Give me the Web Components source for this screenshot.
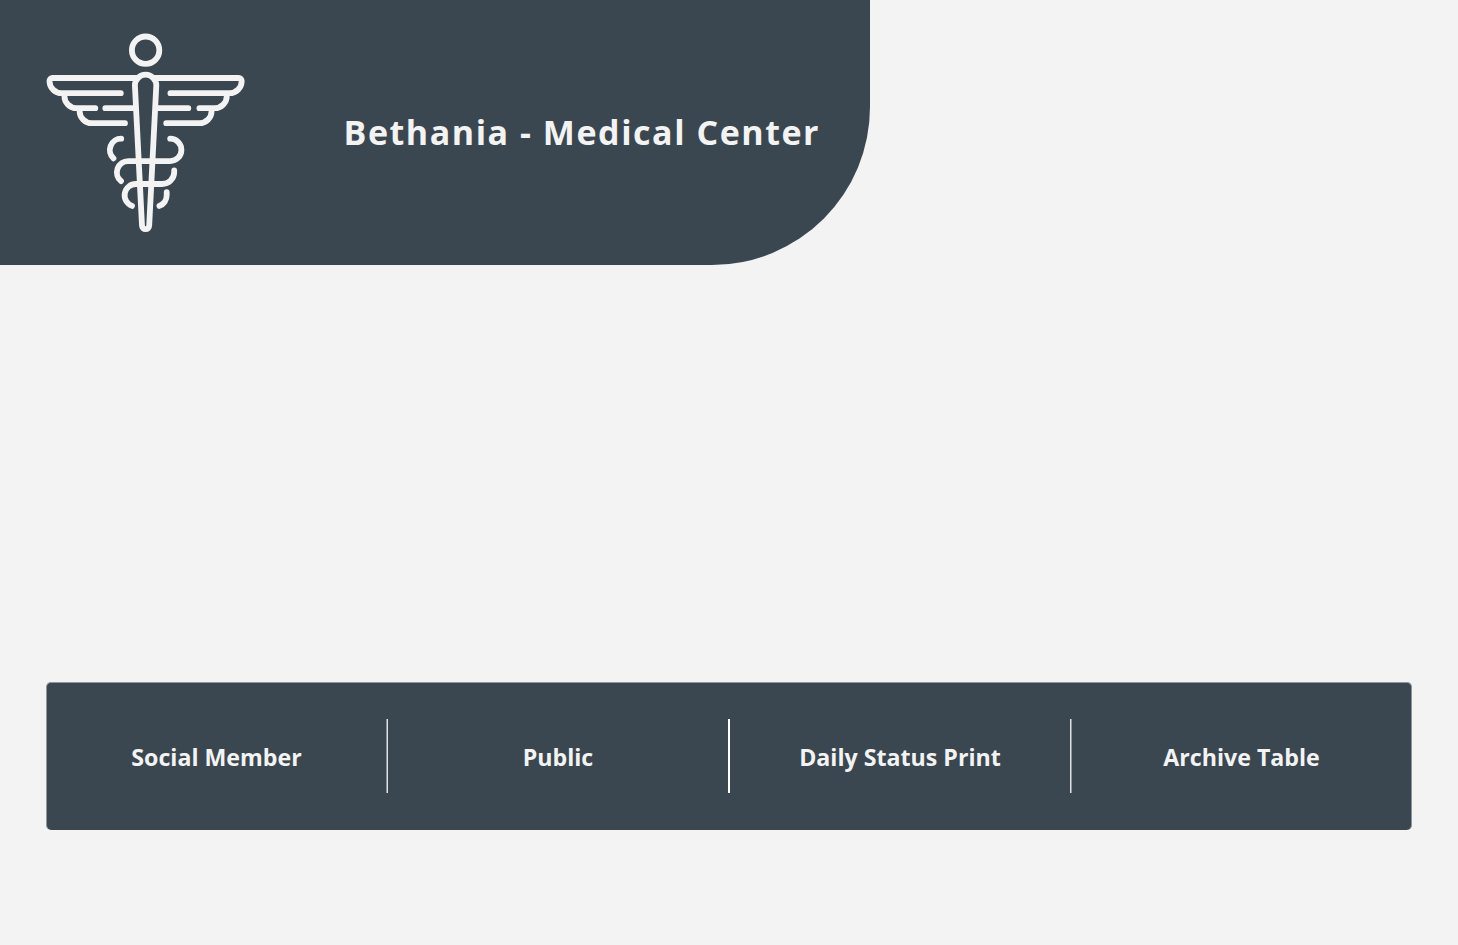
<!DOCTYPE html>
<html lang="en">
<head>
<meta charset="utf-8">
<title>Bethania - Medical Center</title>
<style>
html,body{margin:0;height:100%}
body{background:#f3f3f3;overflow:hidden;font-family:"Open Sans","Noto Sans",sans-serif}
</style>
</head>
<body>
<medical-home></medical-home>
<script>
class CaduceusLogo extends HTMLElement{
  constructor(){
    super();
    this.attachShadow({mode:'open'}).innerHTML=`
<style>:host{display:block;width:210px;height:210px}svg{display:block}</style>
<svg width="210" height="210" viewBox="40 28 210 210" fill="none" stroke="#f3f3f3" stroke-width="5.8" stroke-linecap="round" stroke-linejoin="round">
<defs><g id="wing">
<path d="M136 78H52.5a3 3 0 0 0-3 3A12.2 12.2 0 0 0 61.7 93.2H120.8"/>
<path d="M79.6 109.5V111A12.2 12.2 0 0 0 91.8 123.2H125"/>
</g></defs>
<circle cx="145.6" cy="50.2" r="13.7"/>
<use href="#wing"/><use href="#wing" transform="matrix(-1 0 0 1 291.2 0)"/>
<path d="M64.4 94.5V96A12.2 12.2 0 0 0 76.6 108.2H95.3M105.3 108.2H134"/>
<path d="M226.8 94.5V96A12.2 12.2 0 0 1 214.6 108.2H199.4M188.3 108.2H158"/>
<path d="M134.9 85.4A10.7 10.7 0 0 1 156.3 85.4L149.2 225.6A3.6 3.6 0 0 1 142 225.6Z"/>
<path d="M121.2 138.7A11.3 11.3 0 0 0 113.5 158.3"/>
<path d="M170.2 138.7A11.2 11.2 0 0 1 170.2 161.1H128.2A11.3 11.3 0 0 0 121 181.1"/>
<path d="M174.2 170.5V172A12 12 0 0 1 162.2 184H135.9A11.3 11.3 0 0 0 132 205.9"/>
<path d="M166.7 192.2V195.3A11.3 11.3 0 0 1 159.4 205.9"/>
</svg>`;
  }
}
customElements.define('caduceus-logo',CaduceusLogo);

class SiteBanner extends HTMLElement{
  constructor(){
    super();
    this.attachShadow({mode:'open'}).innerHTML=`
<style>
:host{display:flex;align-items:center;box-sizing:border-box;width:870px;height:265px;padding:1px 0 0 40px;background:#3b4750;border-bottom-right-radius:158px;color:#f3f3f3}
h1{margin:0 0 2px 93.5px;font-size:34px;line-height:48px;font-weight:700;letter-spacing:1.54px;white-space:nowrap}
</style>
<caduceus-logo></caduceus-logo><h1><slot></slot></h1>`;
  }
}
customElements.define('site-banner',SiteBanner);

class NavItem extends HTMLElement{
  constructor(){
    super();
    this.attachShadow({mode:'open'}).innerHTML=`
<style>
:host{display:flex;align-items:center;justify-content:center;box-sizing:border-box;height:74px;padding-top:2px;color:#f3f3f3}
a{font-size:23.2px;line-height:32px;font-weight:700;white-space:nowrap}
</style>
<a><slot></slot></a>`;
  }
}
customElements.define('nav-item',NavItem);

class NavBar extends HTMLElement{
  constructor(){
    super();
    this.attachShadow({mode:'open'}).innerHTML=`
<style>
:host{display:grid;grid-template-columns:339px 2px 340px 2px 340px 2px 339px;align-items:start;box-sizing:border-box;height:148px;padding-top:36px;background:#3b4750;border:1px solid #8f979c;border-bottom:0;border-radius:5px}
i{height:74px;background:#fff}
i.left{background:linear-gradient(270deg,#dfe1e2 50%,#8f969b 50%)}
i.right{background:linear-gradient(90deg,#dfe1e2 50%,#8f969b 50%)}
</style>
<slot name="a"></slot><i class="left"></i><slot name="b"></slot><i></i><slot name="c"></slot><i class="right"></i><slot name="d"></slot>`;
  }
}
customElements.define('nav-bar',NavBar);

class MedicalHome extends HTMLElement{
  constructor(){
    super();
    this.attachShadow({mode:'open'}).innerHTML=`
<style>
:host{display:flex;flex-direction:column;justify-content:space-between;box-sizing:border-box;height:945px;padding-bottom:115px}
nav-bar{margin:0 46px}
</style>
<site-banner>Bethania - Medical Center</site-banner>
<nav-bar><nav-item slot="a">Social Member</nav-item><nav-item slot="b">Public</nav-item><nav-item slot="c">Daily Status Print</nav-item><nav-item slot="d">Archive Table</nav-item></nav-bar>`;
  }
}
customElements.define('medical-home',MedicalHome);
</script>
</body>
</html>
